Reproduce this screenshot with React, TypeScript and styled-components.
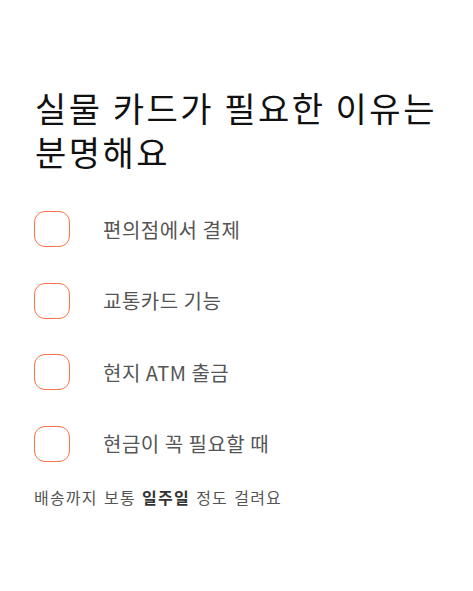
import styled, { createGlobalStyle } from "styled-components";

const GlobalStyle = createGlobalStyle`
  body {
    margin: 0;
    background: #ffffff;
    font-family: "Noto Sans CJK KR", "Noto Sans", sans-serif;
  }
`;

const reasons = ["편의점에서 결제", "교통카드 기능", "현지 ATM 출금", "현금이 꼭 필요할 때"];

function App() {
  return (
    <Page>
      <GlobalStyle />
      <Title>
        실물 카드가 필요한 이유는
        <br />
        분명해요
      </Title>
      <List>
        {reasons.map((r) => (
          <Row key={r}>
            <Check type="button" aria-label={r} />
            <Label>{r}</Label>
          </Row>
        ))}
      </List>
      <Note>
        배송까지 보통 <b>일주일</b> 정도 걸려요
      </Note>
    </Page>
  );
}

const Page = styled.div`
  display: flex;
  flex-direction: column;
  padding: 86px 34px 0;
`;

const Title = styled.h1`
  margin: 0 0 0 1px;
  font-size: 34px;
  line-height: 44px;
  font-weight: 400;
  letter-spacing: 2.5px;
  color: #111111;
`;

const List = styled.div`
  display: flex;
  flex-direction: column;
  gap: 35.5px;
  margin-top: 37px;
`;

const Row = styled.div`
  display: flex;
  align-items: center;
  gap: 33px;
`;

const Check = styled.button`
  width: 36px;
  height: 36px;
  padding: 0;
  border: 1px solid #ff7247;
  border-radius: 11px;
  background: #ffffff;
`;

const Label = styled.span`
  font-size: 20px;
  letter-spacing: 0.5px;
  color: #555555;
`;

const Note = styled.p`
  margin: 24px 0 0;
  font-size: 16px;
  line-height: 22px;
  letter-spacing: 1.2px;
  word-spacing: 1.5px;
  color: #555555;
  b {
    color: #333333;
    font-weight: 700;
  }
`;

export default App;
